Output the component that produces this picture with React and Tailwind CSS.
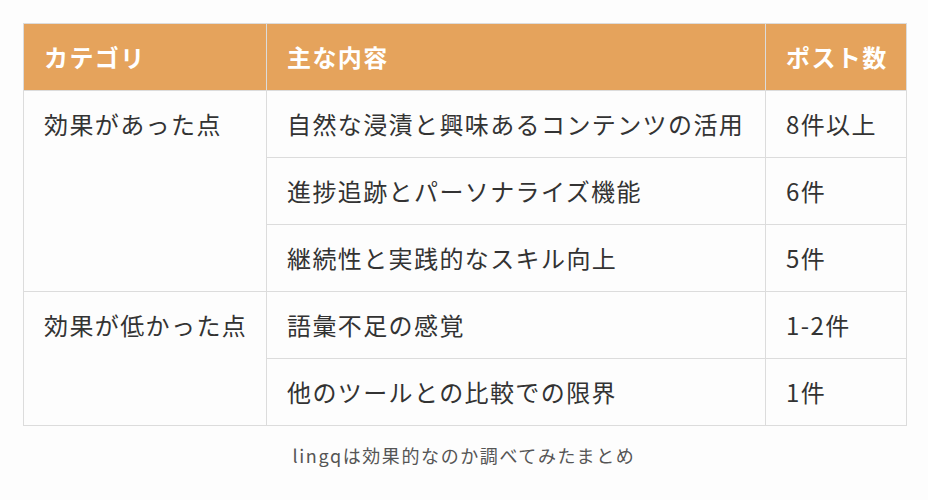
import React from "react";

const ROWS = [
  { cat: "効果があった点", span: 3, content: "自然な浸漬と興味あるコンテンツの活用", count: "8件以上" },
  { content: "進捗追跡とパーソナライズ機能", count: "6件" },
  { content: "継続性と実践的なスキル向上", count: "5件" },
  { cat: "効果が低かった点", span: 2, content: "語彙不足の感覚", count: "1-2件" },
  { content: "他のツールとの比較での限界", count: "1件" },
];

const font = { fontFamily: '"Noto Sans CJK JP", "Noto Sans", sans-serif' };

export default function App() {
  return (
    <div className="w-[928px] h-[500px] bg-[#fdfdfd] pt-[23px] px-[23px]" style={font}>
      <table className="w-[883px] border-collapse table-fixed text-[24px] leading-[26px] tracking-[1.4px] text-[#333] whitespace-nowrap">
        <colgroup>
          <col className="w-[243px]" />
          <col className="w-[499px]" />
          <col className="w-[141px]" />
        </colgroup>
        <thead>
          <tr className="bg-[#e5a35c] text-white font-bold text-left">
            <th className="border border-[#dcdcdc] px-5 py-5 h-[67px]">カテゴリ</th>
            <th className="border border-[#dcdcdc] px-5 py-5">主な内容</th>
            <th className="border border-[#dcdcdc] px-5 py-5">ポスト数</th>
          </tr>
        </thead>
        <tbody>
          {ROWS.map((r, i) => (
            <tr key={i} className="bg-[#fdfdfd]">
              {r.cat && (
                <td rowSpan={r.span} className="border border-[#dcdcdc] pl-5 pr-0 py-5 align-top">
                  {r.cat}
                </td>
              )}
              <td className="border border-[#dcdcdc] px-5 py-5 h-[67px] align-middle">{r.content}</td>
              <td className="border border-[#dcdcdc] px-5 py-5 align-middle">{r.count}</td>
            </tr>
          ))}
        </tbody>
      </table>
      <p className="mt-[17px] text-center text-[18px] leading-6 tracking-[1.6px] text-[#555]">lingqは効果的なのか調べてみたまとめ</p>
    </div>
  );
}
